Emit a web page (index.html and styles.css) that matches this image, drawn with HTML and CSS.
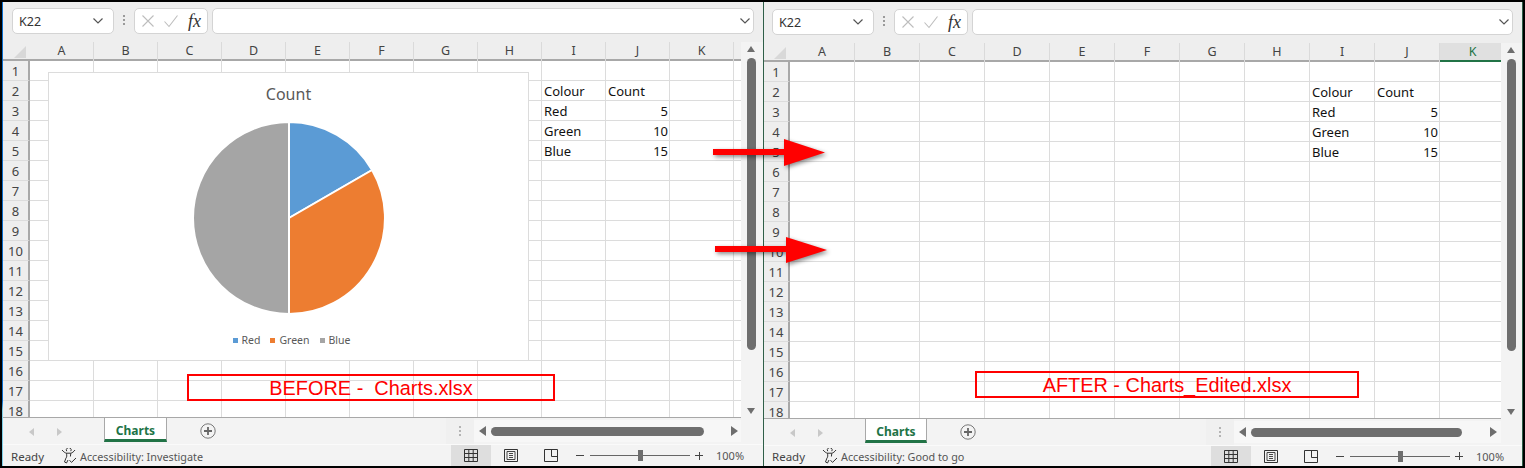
FILE: index.html
```html
<!DOCTYPE html>
<html lang="en">
<head>
<meta charset="utf-8">
<title>Charts comparison</title>
<link rel="stylesheet" href="styles.css">
</head>
<body>
<svg class="sprite" width="0" height="0" aria-hidden="true">
  <symbol id="chev" viewBox="0 0 12 8"><path d="M1.5 1.5 6 6l4.5-4.5" fill="none" stroke="#555" stroke-width="1.2"/></symbol>
  <symbol id="cross" viewBox="0 0 14 14"><path d="M1.5 1.5l11 11M12.5 1.5l-11 11" fill="none" stroke="#bdbdbd" stroke-width="1.1"/></symbol>
  <symbol id="tick" viewBox="0 0 16 14"><path d="M1.5 7.5l4.5 5L14.5 1.5" fill="none" stroke="#bdbdbd" stroke-width="1.1"/></symbol>
  <symbol id="a11y" viewBox="0 0 16 16"><path d="M5.700 3.200a2.400 2.400 0 1 1 4.100 0M1 2c1.500 1.700 3 3 4.500 3.200h4.200c1.500-.2 3-1.500 4.300-3.200M5.500 5.200c.3 2.500.6 3.600-.6 5L3.500 14l2 1 1.500-3M9.800 5.200l-.4 3.300" fill="none" stroke="#333" stroke-width="1"/><path d="M8.500 12.200l2 2.200 4.500-4.400" fill="none" stroke="#333" stroke-width="1"/></symbol>
  <symbol id="v-grid" viewBox="0 0 14 13"><path d="M.5.5h13v12H.5zM.5 4.500h13M.5 8.500h13M4.800.5v12M9.200.5v12" fill="none" stroke="#333"/></symbol>
  <symbol id="v-page" viewBox="0 0 14 13"><path d="M.5.5h13v12H.5z" fill="none" stroke="#333"/><path d="M3 2.500h8v8H3zM5 4.500h4M5 6.500h4M5 8.500h4" fill="none" stroke="#333" stroke-width=".9"/></symbol>
  <symbol id="v-break" viewBox="0 0 14 13"><path d="M.5.500h13v12H.5zM7.500.5v7H13.500" fill="none" stroke="#333"/></symbol>
  <symbol id="plus" viewBox="0 0 16 16"><circle cx="8" cy="8" r="7.200" fill="none" stroke="#777" stroke-width="1"/><path d="M8 4v8M4 8h8" stroke="#666" stroke-width="1.800"/></symbol>
</svg>

<main class="shell">
  <div class="edge"></div>

  <section class="window before">
    <div class="toolbar">
      <div class="namebox"><span>K22</span><svg class="chev"><use href="#chev"/></svg></div>
      <div class="grip"><i></i><i></i><i></i></div>
      <div class="fxbox">
        <svg class="cross"><use href="#cross"/></svg>
        <svg class="tick"><use href="#tick"/></svg>
        <span class="fx">fx</span>
      </div>
      <div class="formula"><svg class="chev"><use href="#chev"/></svg></div>
    </div>
    <div class="body">
      <div class="sheet">
        <div class="row head">
          <div class="corner"><b></b></div>
          <div>A</div><div>B</div><div>C</div><div>D</div><div>E</div><div>F</div><div>G</div><div>H</div><div>I</div><div>J</div><div>K</div>
        </div>
        <div class="rows">
          <div class="row"><div class="rh">1</div></div>
          <div class="row"><div class="rh">2</div><div class="cell col-i">Colour</div><div class="cell col-j">Count</div></div>
          <div class="row"><div class="rh">3</div><div class="cell col-i">Red</div><div class="cell col-j num">5</div></div>
          <div class="row"><div class="rh">4</div><div class="cell col-i">Green</div><div class="cell col-j num">10</div></div>
          <div class="row"><div class="rh">5</div><div class="cell col-i">Blue</div><div class="cell col-j num">15</div></div>
          <div class="row"><div class="rh">6</div></div>
          <div class="row"><div class="rh">7</div></div>
          <div class="row"><div class="rh">8</div></div>
          <div class="row"><div class="rh">9</div></div>
          <div class="row"><div class="rh">10</div></div>
          <div class="row"><div class="rh">11</div></div>
          <div class="row"><div class="rh">12</div></div>
          <div class="row"><div class="rh">13</div></div>
          <div class="row"><div class="rh">14</div></div>
          <div class="row"><div class="rh">15</div></div>
          <div class="row"><div class="rh">16</div></div>
          <div class="row"><div class="rh">17</div></div>
          <div class="row"><div class="rh">18</div></div>

          <figure class="chart">
            <figcaption class="chart-title">Count</figcaption>
            <svg class="pie" viewBox="0 0 196 196" width="196" height="196">
              <path d="M98 98V2A96 96 0 0 1 181.100 50Z" fill="#5b9bd5" stroke="#fff" stroke-width="2"/>
              <path d="M98 98L181.100 50A96 96 0 0 1 98 194Z" fill="#ed7d31" stroke="#fff" stroke-width="2"/>
              <path d="M98 98V194A96 96 0 0 1 98 2Z" fill="#a5a5a5" stroke="#fff" stroke-width="2"/>
            </svg>
            <div class="legend">
              <span><i class="sw blue"></i>Red</span>
              <span><i class="sw orange"></i>Green</span>
              <span><i class="sw grey"></i>Blue</span>
            </div>
          </figure>
          <div class="note">BEFORE -  Charts.xlsx</div>
        </div>
      </div>
      <div class="vscroll">
        <div class="tri-up"></div>
        <div class="vthumb"></div>
        <div class="tri-down"></div>
      </div>
    </div>
    <div class="tabs">
      <div class="nav"><i class="tl"></i><i class="tr"></i></div>
      <div class="tab">Charts</div>
      <svg class="plus"><use href="#plus"/></svg>
      <div class="spacer"></div>
      <div class="tabgrip"><div class="grip"><i></i><i></i><i></i></div></div>
      <div class="hscroll"><i class="hl"></i><div class="hthumb"></div><i class="hr"></i></div>
    </div>
    <div class="status">
      <span class="ready">Ready</span>
      <svg class="a11y"><use href="#a11y"/></svg>
      <span class="a11y-text">Accessibility: Investigate</span>
      <div class="spacer"></div>
      <div class="view on"><svg><use href="#v-grid"/></svg></div>
      <div class="view"><svg><use href="#v-page"/></svg></div>
      <div class="view"><svg><use href="#v-break"/></svg></div>
      <div class="zoom">
        <i class="minus"></i>
        <div class="track"><i class="knob"></i></div>
        <i class="add"></i>
        <span class="pct">100%</span>
      </div>
    </div>
  </section>

  <div class="divider"></div>

  <section class="window after">
    <div class="toolbar">
      <div class="namebox"><span>K22</span><svg class="chev"><use href="#chev"/></svg></div>
      <div class="grip"><i></i><i></i><i></i></div>
      <div class="fxbox">
        <svg class="cross"><use href="#cross"/></svg>
        <svg class="tick"><use href="#tick"/></svg>
        <span class="fx">fx</span>
      </div>
      <div class="formula"><svg class="chev"><use href="#chev"/></svg></div>
    </div>
    <div class="body">
      <div class="sheet">
        <div class="row head">
          <div class="corner"><b></b></div>
          <div>A</div><div>B</div><div>C</div><div>D</div><div>E</div><div>F</div><div>G</div><div>H</div><div>I</div><div>J</div><div class="active">K</div>
        </div>
        <div class="rows">
          <div class="row"><div class="rh">1</div></div>
          <div class="row"><div class="rh">2</div><div class="cell col-i">Colour</div><div class="cell col-j">Count</div></div>
          <div class="row"><div class="rh">3</div><div class="cell col-i">Red</div><div class="cell col-j num">5</div></div>
          <div class="row"><div class="rh">4</div><div class="cell col-i">Green</div><div class="cell col-j num">10</div></div>
          <div class="row"><div class="rh">5</div><div class="cell col-i">Blue</div><div class="cell col-j num">15</div></div>
          <div class="row"><div class="rh">6</div></div>
          <div class="row"><div class="rh">7</div></div>
          <div class="row"><div class="rh">8</div></div>
          <div class="row"><div class="rh">9</div></div>
          <div class="row"><div class="rh">10</div></div>
          <div class="row"><div class="rh">11</div></div>
          <div class="row"><div class="rh">12</div></div>
          <div class="row"><div class="rh">13</div></div>
          <div class="row"><div class="rh">14</div></div>
          <div class="row"><div class="rh">15</div></div>
          <div class="row"><div class="rh">16</div></div>
          <div class="row"><div class="rh">17</div></div>
          <div class="row"><div class="rh">18</div></div>
          <div class="note">AFTER - Charts_Edited.xlsx</div>
        </div>
      </div>
      <div class="vscroll">
        <div class="tri-up"></div>
        <div class="vthumb"></div>
        <div class="tri-down"></div>
      </div>
    </div>
    <div class="tabs">
      <div class="nav"><i class="tl"></i><i class="tr"></i></div>
      <div class="tab">Charts</div>
      <svg class="plus"><use href="#plus"/></svg>
      <div class="spacer"></div>
      <div class="tabgrip"><div class="grip"><i></i><i></i><i></i></div></div>
      <div class="hscroll"><i class="hl"></i><div class="hthumb"></div><i class="hr"></i></div>
    </div>
    <div class="status">
      <span class="ready">Ready</span>
      <svg class="a11y"><use href="#a11y"/></svg>
      <span class="a11y-text">Accessibility: Good to go</span>
      <div class="spacer"></div>
      <div class="view on"><svg><use href="#v-grid"/></svg></div>
      <div class="view"><svg><use href="#v-page"/></svg></div>
      <div class="view"><svg><use href="#v-break"/></svg></div>
      <div class="zoom">
        <i class="minus"></i>
        <div class="track"><i class="knob"></i></div>
        <i class="add"></i>
        <span class="pct">100%</span>
      </div>
    </div>
  </section>

  <svg class="arrows" viewBox="0 0 1525 468" width="1525" height="468" aria-hidden="true">
    <path d="M713 149H784V139L825 152.500L784 166V155H713Z"/>
    <path d="M715 246H786V237L827 250L786 263V252H715Z"/>
  </svg>
</main>
</body>
</html>
```
FILE: styles.css
```css
* { box-sizing: border-box; }

html, body {
  margin: 0;
  height: 100%;
  background: #000;
  overflow: hidden;
}

.sprite { position: absolute; }

.shell {
  position: relative;
  display: flex;
  width: 1525px;
  height: 468px;
  padding: 2px;
  background: #000;
  font-family: "Noto Sans", "Open Sans", sans-serif;
  color: #444;
}

.edge {
  width: 1px;
  background: linear-gradient(#0a6fd0 0, #0a6fd0 86%, #7fd0e8 88%, #7fd0e8 100%);
}

.divider { width: 1px; background: #2f5f48; }

.window {
  display: flex;
  flex-direction: column;
  background: #eeeeee;
}

.before {
  --cw: 64px;
  --rh: 27px;
  --pad: 9px;
  --sheet-w: 738px;
  --bar-w: 22px;
  --tab-w: 63px;
  --plus-gap: 33px;
  --ht: 213px;
  --hr-gap: 27px;
  width: 760px;
}

.after {
  --cw: 65px;
  --rh: 26px;
  --pad: 8px;
  --sheet-w: 737px;
  --bar-w: 21px;
  --tab-w: 62px;
  --plus-gap: 33px;
  --ht: 211px;
  --hr-gap: 28px;
  width: 759px;
  padding-top: 1px;
  border-right: 1px solid #2f5f48;
}

/* formula bar */
.toolbar {
  display: flex;
  align-items: flex-start;
  height: 40px;
  padding: 6px 0 0 var(--pad);
}

.namebox, .fxbox, .formula {
  display: flex;
  align-items: center;
  height: 26px;
  background: #fff;
  border: 1px solid #d4d4d4;
  border-radius: 5px;
}

.namebox {
  width: 102px;
  justify-content: space-between;
  padding: 0 9px 0 6px;
  font-size: 12.5px;
  color: #333;
}

.chev { width: 12px; height: 8px; }

.grip {
  display: flex;
  flex-direction: column;
  gap: 2px;
  align-items: center;
  width: 20px;
  padding-top: 7px;
}

.grip i { width: 2px; height: 2px; background: #9a9a9a; }

.fxbox {
  width: 74px;
  padding-left: 6px;
}

.cross { width: 14px; height: 14px; }
.tick { width: 16px; height: 14px; margin-left: 8px; }

.fx {
  margin-left: 9px;
  font-family: "Liberation Serif", serif;
  font-style: italic;
  font-size: 18px;
  line-height: 22px;
  color: #333;
}

.formula {
  flex: 1;
  margin-left: 4px;
  margin-right: 9px;
  justify-content: flex-end;
  padding-right: 2px;
}

/* sheet */
.body { display: flex; height: 376px; }

.sheet {
  width: var(--sheet-w);
  overflow: hidden;
  border-bottom: 1px solid #a8a8a8;
}

.row {
  display: grid;
  grid-template-columns: var(--rh) repeat(11, var(--cw));
  grid-auto-rows: 20px;
  width: calc(var(--rh) + var(--cw) * 12);
  height: 20px;
  font-size: 13px;
  line-height: 21px;
}

.rows {
  position: relative;
  background: #fff;
}

.rows .row {
  background-color: #fff;
  background-image:
    repeating-linear-gradient(90deg, transparent 0, transparent calc(var(--cw) - 1px), #dcdcdc calc(var(--cw) - 1px), #dcdcdc var(--cw)),
    linear-gradient(#dcdcdc, #dcdcdc);
  background-size: 100% 100%, 100% 1px;
  background-position: var(--rh) 0, 0 100%;
  background-repeat: repeat-x, no-repeat;
}

.head {
  height: 19px;
  grid-auto-rows: 19px;
  background: #eeeeee;
  border-bottom: 2px solid #a8a8a8;
  text-align: center;
  font-size: 12.5px;
  line-height: 17px;
  color: #444;
}

.head > div { border-right: 1px solid #dadada; }
.head .corner { position: relative; border-right: 0; }

.corner b {
  position: absolute;
  right: 4px;
  bottom: 3px;
  width: 12px;
  height: 12px;
  background: #d8d8d8;
  clip-path: polygon(100% 0, 100% 100%, 0 100%);
}

.head .active {
  height: 19px;
  background: #e0e0e0;
  color: #217346;
  border-bottom: 2px solid #217346;
  border-right: 0;
}

.rh {
  background: #eeeeee;
  border-right: 2px solid #a8a8a8;
  border-bottom: 1px solid #dcdcdc;
  text-align: center;
  color: #444;
  font-size: 13px;
  height: 20px;
}

.cell {
  grid-row: 1;
  padding: 0 2px;
  color: #111;
  white-space: nowrap;
}

.col-i { grid-column: 10; }
.col-j { grid-column: 11; }
.num { text-align: right; }

/* chart */
.chart {
  position: absolute;
  left: 45px;
  top: 11px;
  display: flex;
  flex-direction: column;
  align-items: center;
  width: 481px;
  height: 289px;
  margin: 0;
  background: #fff;
  border: 1px solid #dcdcdc;
}

.chart-title {
  margin-top: 9px;
  height: 30px;
  font-size: 16px;
  line-height: 24px;
  color: #595959;
}

.pie { display: block; margin-top: 8px; }

.legend {
  display: flex;
  gap: 10px;
  margin-top: 16px;
  padding-left: 6px;
  font-size: 10.500px;
  line-height: 16px;
  color: #595959;
}

.sw {
  display: inline-block;
  width: 5px;
  height: 5px;
  margin-right: 4px;
  vertical-align: 1px;
}

.blue { background: #5b9bd5; }
.orange { background: #ed7d31; }
.grey { background: #a5a5a5; }

.note {
  position: absolute;
  height: 27px;
  border: 2px solid #f00;
  font-family: "Liberation Sans", Arial, sans-serif;
  font-size: 19.900px;
  line-height: 24px;
  color: #f00;
  text-align: center;
  white-space: pre;
}

.before .note { left: 184px; top: 313px; width: 368px; }
.after .note { left: 211px; top: 309px; width: 384px; }

/* vertical scrollbar */
.vscroll {
  display: flex;
  flex-direction: column;
  align-items: flex-start;
  width: var(--bar-w);
  padding-left: 6px;
  background: #f3f3f3;
}

.tri-up, .tri-down {
  width: 0;
  height: 0;
  border-left: 4.500px solid transparent;
  border-right: 4.500px solid transparent;
}

.tri-up { margin-top: 4px; border-bottom: 6px solid #6e6e6e; }
.tri-down { margin-top: 58px; border-top: 6px solid #6e6e6e; }

.vthumb {
  width: 9px;
  height: 292px;
  margin-top: 6px;
  background: #6e6e6e;
  border-radius: 5px;
}

/* sheet tabs */
.tabs {
  display: flex;
  align-items: flex-start;
  height: 27px;
  background: #f3f3f3;
  border-bottom: 1px solid #fafafa;
}

.nav {
  display: flex;
  gap: 23px;
  width: 101px;
  padding: 10px 0 0 26px;
}

.tl, .tr, .hl, .hr { display: block; width: 0; height: 0; border-top: 4px solid transparent; border-bottom: 4px solid transparent; }
.tl { border-right: 5px solid #c8c8c8; }
.tr { border-left: 5px solid #c8c8c8; }

.tab {
  width: var(--tab-w);
  height: 24px;
  background: #fff;
  border: 1px solid #a8a8a8;
  border-top: 0;
  border-bottom: 3px solid #217346;
  text-align: center;
  font-size: 12px;
  font-weight: 700;
  line-height: 25px;
  color: #217346;
}

.plus {
  width: 16px;
  height: 16px;
  margin: 5px 0 0 var(--plus-gap);
}

.spacer { flex: 1; }

.tabgrip {
  display: flex;
  justify-content: center;
  width: 28px;
  height: 26px;
  background: #f0f0f0;
}

.tabgrip .grip { padding-top: 8px; }
.tabgrip .grip i { background: #b4b4b4; }

.hscroll {
  display: flex;
  align-items: center;
  width: 267px;
  height: 22px;
  margin: 2px var(--bar-w) 0 0;
  padding-left: 5px;
  background: #f7f7f7;
}

.hl { border-right: 7px solid #6e6e6e; border-top-width: 5px; border-bottom-width: 5px; }
.hr { border-left: 7px solid #6e6e6e; border-top-width: 5px; border-bottom-width: 5px; }

.hthumb {
  width: var(--ht);
  height: 9px;
  margin: 0 var(--hr-gap) 0 5px;
  background: #6e6e6e;
  border-radius: 5px;
}

/* status bar */
.status {
  display: flex;
  align-items: center;
  flex: 1;
  background: #f3f3f3;
  font-size: 11px;
  color: #444;
}

.ready { margin-left: 8px; width: 50px; padding-top: 1px; font-size: 11.5px; }
.a11y { width: 16px; height: 16px; }
.a11y-text { margin-left: 3px; padding-top: 1px; color: #555; font-size: 10.800px; }

.view {
  display: flex;
  align-items: center;
  justify-content: center;
  width: 40px;
  height: 100%;
}

.view svg { width: 14px; height: 13px; }
.view.on { background: #dedede; }

.zoom {
  display: flex;
  align-items: center;
  width: 192px;
  padding-left: 5px;
}

.after .zoom { width: 191px; }

.minus, .add { position: relative; display: block; width: 8px; height: 1px; background: #444; }
.add::after {
  content: "";
  position: absolute;
  left: 3.500px;
  top: -3.500px;
  width: 1px;
  height: 8px;
  background: #444;
}

.track {
  position: relative;
  width: 100px;
  height: 1px;
  margin: 0 5px 0 6px;
  background: #666;
}

.knob {
  position: absolute;
  left: 48px;
  top: -5px;
  width: 5px;
  height: 11px;
  background: #6e6e6e;
}

.pct { margin-left: 13px; font-size: 11px; color: #555; }

/* overlay arrows */
.arrows {
  position: absolute;
  left: 0;
  top: 0;
  fill: #f00;
  filter: drop-shadow(2px 2px 2px rgba(0, 0, 0, .45));
  pointer-events: none;
}
```
